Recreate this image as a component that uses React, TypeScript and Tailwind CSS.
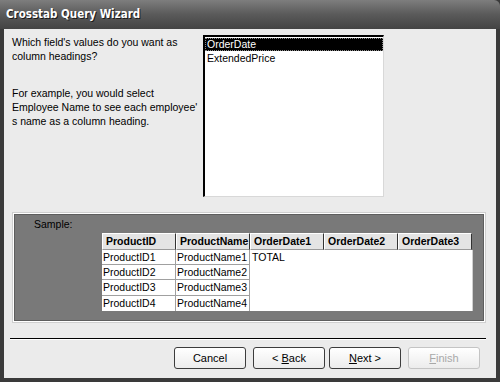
import React from "react";

const font = { fontFamily: '"Liberation Sans", Arial, sans-serif' };
const titleFont = { fontFamily: '"Liberation Sans Narrow", "DejaVu Sans Condensed", sans-serif' };

function HeaderCell({ label }: { label: string }) {
    return (
        <div className="w-[74px] h-[17px] shrink-0 overflow-hidden whitespace-nowrap bg-[#e4e4e4] border-t border-l border-white border-r border-r-[#333] border-b border-b-[#9a9a9a] pl-[3px] text-[10.5px] font-bold leading-[15px] text-black">
            {label}
        </div>
    );
}

function Button({ label, accel, rest, pre, disabled }: { label?: string; accel?: string; rest?: string; pre?: string; disabled?: boolean }) {
    return (
        <button
            type="button"
            className={`w-[72px] h-[22px] rounded-[3px] border text-[11px] leading-[20px] bg-gradient-to-b from-white to-[#ececec] ${disabled ? "border-[#c4c4c4] text-[#a8a8a8]" : "border-[#3c3c3c] text-black"}`}
        >
            {label}
            {pre}
            {accel && <span className="underline">{accel}</span>}
            {rest}
        </button>
    );
}

export default function App() {
    const rows = ["1", "2", "3", "4"];
    return (
        <div className="w-[500px] h-[382px] bg-[#3a3a3a] flex flex-col overflow-hidden" style={font}>
            <div className="h-[29px] shrink-0 rounded-tr-[6px] bg-gradient-to-b from-[#7e7e7e] via-[#5a5a5a] to-[#444] flex items-center pl-[6px]">
                <span className="text-[11.5px] font-bold text-white [text-shadow:1px_1px_0_#1a1a1a]" style={titleFont}>Crosstab Query Wizard</span>
            </div>
            <div className="flex-1 mx-[4px] mb-[4px] bg-[#ebebeb] flex flex-col">
                <div className="flex mt-[6px] h-[162px]">
                    <div className="w-[199px] pl-[8px] text-[10.5px] leading-[14px] text-black">
                        <p className="pr-[16px]">Which field's values do you want as column headings?</p>
                        <p className="mt-[23px] pr-[2px]">For example, you would select Employee Name to see each employee' s name as a column heading.</p>
                    </div>
                    <div className="w-[181px] h-[162px] bg-white border-t-2 border-l-2 border-t-black border-l-black border-r border-b border-r-[#d8d8d8] border-b-[#d8d8d8] pt-[1px]">
                        <div className="h-[13px] bg-black text-white text-[10.5px] leading-[13px] pl-[2px] outline-1 outline-dotted outline-[#888] -outline-offset-1">OrderDate</div>
                        <div className="h-[13px] text-black text-[10.5px] leading-[13px] pl-[2px] mt-[1px]">ExtendedPrice</div>
                    </div>
                </div>
                <div className="mt-[15px] ml-[8px] mr-[10px] h-[111px] border border-[#cfcfcf] p-[1px] bg-white">
                    <div className="h-full bg-[#797979] border border-[#5e5e5e] pl-[19px] pt-[3px]">
                        <div className="text-[10.5px] leading-[12px] text-black">Sample:</div>
                        <div className="ml-[68px] mt-[3px] flex flex-col w-[371px]">
                            <div className="flex">
                                <HeaderCell label="ProductID" />
                                <HeaderCell label="ProductName" />
                                <HeaderCell label="OrderDate1" />
                                <HeaderCell label="OrderDate2" />
                                <HeaderCell label="OrderDate3" />
                            </div>
                            <div className="flex bg-white">
                                <div className="w-[148px] shrink-0 flex flex-col">
                                    {rows.map((r, i) => (
                                        <div key={r} className={`flex ${i === 2 ? "h-[16px]" : "h-[15px]"} border-b border-[#a0a0a0] last:border-b-0`}>
                                            <div className="w-[74px] border-r border-[#a0a0a0] pl-[1px] text-[10.5px] leading-[14px] text-black whitespace-nowrap overflow-hidden">ProductID{r}</div>
                                            <div className="w-[74px] border-r border-[#a0a0a0] pl-[1px] text-[10.5px] leading-[14px] text-black whitespace-nowrap overflow-hidden">ProductName{r}</div>
                                        </div>
                                    ))}
                                </div>
                                <div className="flex-1 pl-[2px] text-[10.5px] leading-[14px] text-black border-r border-[#d0d0d0]">TOTAL</div>
                            </div>
                        </div>
                    </div>
                </div>
                <div className="mt-[15px] ml-[6px] mr-[10px] h-[2px] border-t border-black border-b border-b-white" />
                <div className="mt-[7px] flex justify-end pr-[16px]">
                    <Button label="Cancel" />
                    <div className="w-[7px]" />
                    <Button pre="< " accel="B" rest="ack" />
                    <div className="w-[4px]" />
                    <Button accel="N" rest="ext >" />
                    <div className="w-[7px]" />
                    <Button accel="F" rest="inish" disabled />
                </div>
            </div>
        </div>
    );
}
